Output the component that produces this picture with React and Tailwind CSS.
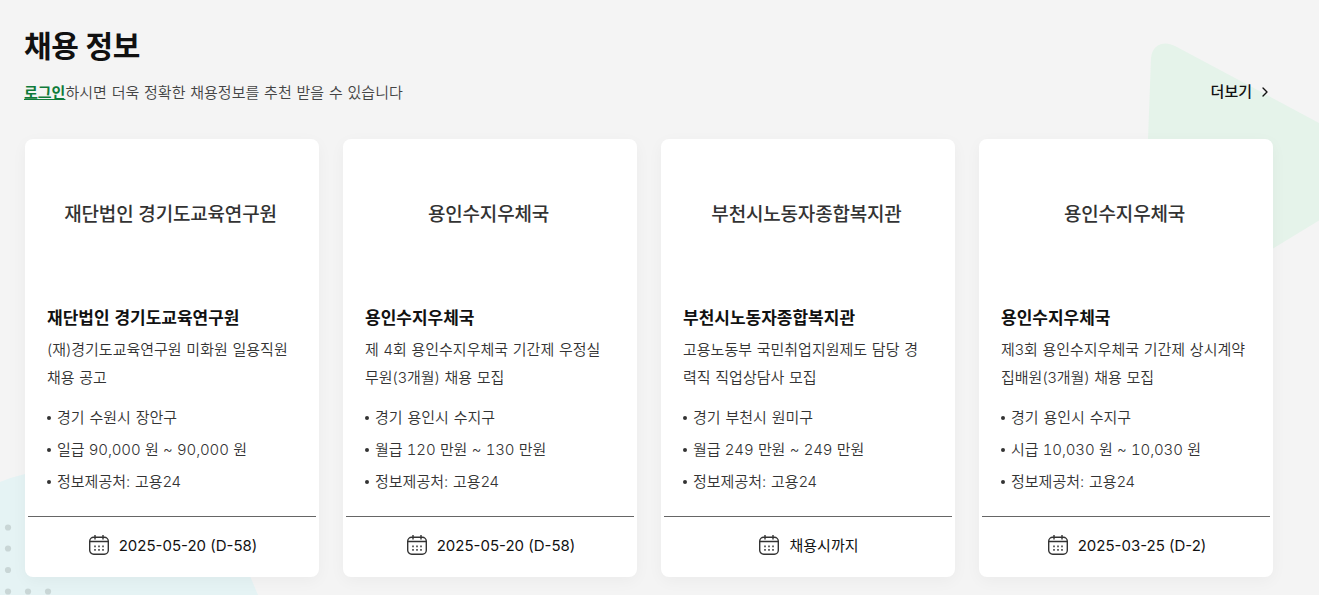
import React from 'react';
import { ChevronRight } from 'lucide-react';

const JOBS = [
  {
    company: '재단법인 경기도교육연구원',
    title: ['(재)경기도교육연구원 미화원 일용직원', '채용 공고'],
    region: '경기 수원시 장안구',
    pay: '일급 90,000 원 ~ 90,000 원',
    source: '정보제공처: 고용24',
    deadline: '2025-05-20 (D-58)',
  },
  {
    company: '용인수지우체국',
    title: ['제 4회 용인수지우체국 기간제 우정실', '무원(3개월) 채용 모집'],
    region: '경기 용인시 수지구',
    pay: '월급 120 만원 ~ 130 만원',
    source: '정보제공처: 고용24',
    deadline: '2025-05-20 (D-58)',
  },
  {
    company: '부천시노동자종합복지관',
    title: ['고용노동부 국민취업지원제도 담당 경', '력직 직업상담사 모집'],
    region: '경기 부천시 원미구',
    pay: '월급 249 만원 ~ 249 만원',
    source: '정보제공처: 고용24',
    deadline: '채용시까지',
  },
  {
    company: '용인수지우체국',
    title: ['제3회 용인수지우체국 기간제 상시계약', '집배원(3개월) 채용 모집'],
    region: '경기 용인시 수지구',
    pay: '시급 10,030 원 ~ 10,030 원',
    source: '정보제공처: 고용24',
    deadline: '2025-03-25 (D-2)',
  },
];

function CalendarIcon() {
  return (
    <svg className="w-[22px] h-[22px] shrink-0 mb-0.5" viewBox="0 0 22 22" fill="none" stroke="#333" strokeWidth="1.4">
      <rect x="1.7" y="3.2" width="18.6" height="17" rx="4" />
      <path d="M1.7 7.5h18.6M7 1v4.5M15 1v4.5" />
      <path d="M6 12.4h2M10 12.4h2M14 12.4h2M6 15.8h2M10 15.8h2M14 15.8h2" strokeWidth="1.7" stroke="#666" />
    </svg>
  );
}

function Decorations() {
  return (
    <div className="absolute inset-0 pointer-events-none">
      <svg className="absolute right-0 top-0 w-[200px] h-[270px]" viewBox="0 0 200 270">
        <path d="M32 58C33 48 39 43.500 47 43.500Q51 43.500 56 46L200 123V220.500L154 248.500L60 302H25L29 139Z" fill="#e5f3ea" />
      </svg>
      <svg className="absolute left-0 bottom-0 w-[280px] h-[135px]" viewBox="0 0 280 135">
        <path d="M0 22Q12 17 25 14C130 -10 215 25 250 116L258 135H0Z" fill="#e5f3f4" />
        <g fill="#c9d6d6">
          <circle cx="8" cy="67.500" r="3.1" />
          <circle cx="8" cy="88.500" r="3.1" />
          <circle cx="8" cy="110" r="3.1" />
          <circle cx="8" cy="131.500" r="3.1" />
          <circle cx="28" cy="131.500" r="3.1" />
          <circle cx="48" cy="131.500" r="3.1" />
        </g>
      </svg>
    </div>
  );
}

function Detail({ className, children }) {
  return (
    <li className={`flex items-center ${className || ''}`}>
      <span className="w-1 h-1 rounded-full bg-[#333] mr-1.5" />
      {children}
    </li>
  );
}

function JobCard({ company, title, region, pay, source, deadline }) {
  return (
    <li className="w-[294px] h-[438px] bg-white rounded-lg shadow-[0_4px_16px_rgba(0,0,0,0.04)] flex flex-col">
      <div className="h-[150px] pt-0.5 pr-[3px] flex items-center justify-center text-[19px] font-medium tracking-[-0.18px] text-[#333]">
        {company}
      </div>
      <div className="px-[22px] pt-[15px]">
        <h3 className="text-[17px] leading-7 font-bold [word-spacing:0.8px] text-[#111]">{company}</h3>
        <p className="mt-1 text-[15px] leading-7 font-[350] [word-spacing:0.5px] text-[#333] whitespace-nowrap">
          {title.map((line) => (
            <span key={line} className="block">{line}</span>
          ))}
        </p>
        <ul className="mt-2.5 text-[15px] leading-8 font-[350] [word-spacing:0.6px] text-[#333] whitespace-nowrap">
          <Detail>{region}</Detail>
          <Detail className="tabular-nums tracking-[-0.15px]">{pay}</Detail>
          <Detail>{source}</Detail>
        </ul>
      </div>
      <div className="mx-[3px] mt-[18px] h-[59px] pl-px border-t border-[#666] flex items-center justify-center gap-[9px] text-[15px] text-[#111]">
        <CalendarIcon />
        <span>{deadline}</span>
      </div>
    </li>
  );
}

export default function App() {
  return (
    <section className="relative h-[595px] overflow-hidden bg-[#f4f4f4] font-[Inter,'Noto_Sans_CJK_KR',sans-serif]">
      <Decorations />
      <div className="relative w-[1249px] ml-[25px] pt-[26px]">
        <h2 className="-ml-px text-[30px] leading-10 font-bold text-[#111] tracking-[-0.3px]">채용 정보</h2>
        <div className="mt-3 h-7 flex items-center justify-between">
          <p className="-ml-px pt-0.5 text-[15px] font-[350] [word-spacing:0.6px] text-[#444]">
            <a href="#login" className="font-bold text-[#0f7b3a] underline">로그인</a>
            하시면 더욱 정확한 채용정보를 추천 받을 수 있습니다
          </p>
          <a href="#more" className="flex items-center gap-[5px] pr-px text-[15px] font-medium text-[#111]">
            더보기
            <ChevronRight className="w-4 h-4" />
          </a>
        </div>
        <ul className="mt-[33px] flex gap-6">
          {JOBS.map((job, i) => (
            <JobCard key={i} {...job} />
          ))}
        </ul>
      </div>
    </section>
  );
}
